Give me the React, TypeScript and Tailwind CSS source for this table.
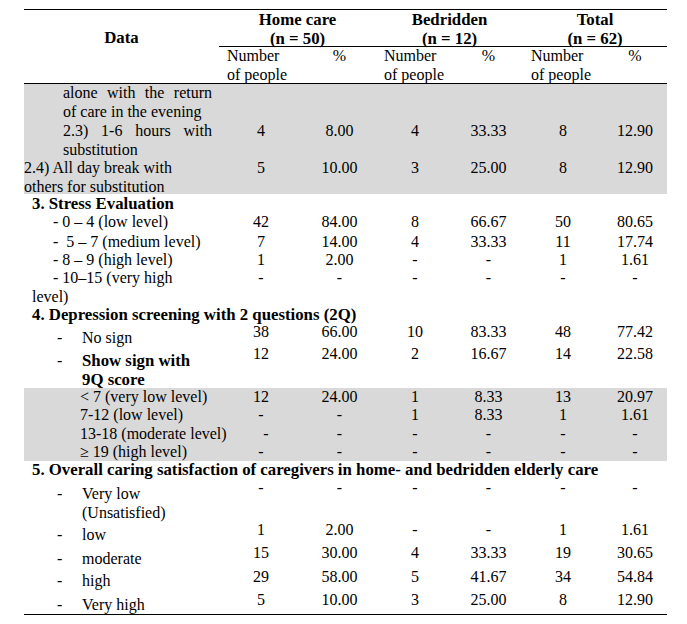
import type { ReactNode } from 'react';

const grid = 'grid grid-cols-[195px_84px_73px_78px_69px_80px_64px]';

type Row = {
  cls: string;
  label: ReactNode;
  vals?: string[];
  vt?: string;
  firstPad?: string;
};

const Dash = ({ text, bold, pt }: { text: ReactNode; bold?: boolean; pt: string }) => (
  <div className={`flex pl-[33px] ${pt}`}>
    <span className="w-[25px] shrink-0">-</span>
    <span className={bold ? 'font-bold text-[16.8px]' : ''}>{text}</span>
  </div>
);

const rows: Row[] = [
  {
    cls: 'h-[37px] bg-[#d9d9d9]',
    label: (
      <div className="pl-[39px] pr-[7px]">
        <p className="text-justify [text-align-last:justify]">alone with the return</p>
        <p>of care in the evening</p>
      </div>
    ),
  },
  {
    cls: 'h-[37px] bg-[#d9d9d9]',
    label: (
      <div className="pl-[39px] pr-[7px] pt-[1px]">
        <p className="text-justify [text-align-last:justify]">2.3) 1-6 hours with</p>
        <p>substitution</p>
      </div>
    ),
    vals: ['4', '8.00', '4', '33.33', '8', '12.90'],
    vt: 'pt-[1px]',
  },
  {
    cls: 'h-[36px] bg-[#d9d9d9]',
    label: (
      <div className="pt-[1px]">
        <p>2.4) All day break with</p>
        <p>others for substitution</p>
      </div>
    ),
    vals: ['5', '10.00', '3', '25.00', '8', '12.90'],
    vt: 'pt-[1px]',
  },
  { cls: 'h-[19px]', label: <p className="pl-[8px] pt-[1px] text-[16.8px] font-bold">3. Stress Evaluation</p> },
  {
    cls: 'h-[19px]',
    label: <p className="pl-[29px]">- 0 – 4 (low level)</p>,
    vals: ['42', '84.00', '8', '66.67', '50', '80.65'],
  },
  {
    cls: 'h-[19px]',
    label: <p className="pl-[29px] pt-[1px]">-&nbsp; 5 – 7 (medium level)</p>,
    vals: ['7', '14.00', '4', '33.33', '11', '17.74'],
    vt: 'pt-[1px]',
  },
  {
    cls: 'h-[18px]',
    label: <p className="pl-[29px]">- 8 – 9 (high level)</p>,
    vals: ['1', '2.00', '-', '-', '1', '1.61'],
  },
  {
    cls: 'h-[37px]',
    label: (
      <div>
        <p className="pl-[29px]">- 10–15 (very high</p>
        <p className="pl-[8px]">level)</p>
      </div>
    ),
    vals: ['-', '-', '-', '-', '-', '-'],
  },
  {
    cls: 'h-[16px]',
    label: (
      <p className="whitespace-nowrap pl-[8px] pt-[2px] text-[16.8px] leading-[14px] font-bold">
        4. Depression screening with 2 questions (2Q)
      </p>
    ),
  },
  {
    cls: 'h-[23px]',
    label: <Dash text="No sign" pt="pt-[7px]" />,
    vals: ['38', '66.00', '10', '83.33', '48', '77.42'],
    vt: 'pt-[2px] leading-[16px]',
  },
  {
    cls: 'h-[43px]',
    label: <Dash text={<>Show sign with<br />9Q score</>} bold pt="pt-[7px]" />,
    vals: ['12', '24.00', '2', '16.67', '14', '22.58'],
  },
  {
    cls: 'h-[18px] bg-[#d9d9d9]',
    label: <p className="pl-[56px]">&lt; 7 (very low level)</p>,
    vals: ['12', '24.00', '1', '8.33', '13', '20.97'],
  },
  {
    cls: 'h-[19px] bg-[#d9d9d9]',
    label: <p className="pl-[56px]">7-12 (low level)</p>,
    vals: ['-', '-', '1', '8.33', '1', '1.61'],
  },
  {
    cls: 'h-[18px] bg-[#d9d9d9]',
    label: <p className="whitespace-nowrap pl-[56px]">13-18 (moderate level)</p>,
    vals: ['-', '-', '-', '-', '-', '-'],
    firstPad: 'pl-[10px]',
  },
  {
    cls: 'h-[18px] bg-[#d9d9d9]',
    label: <p className="pl-[56px]">≥ 19 (high level)</p>,
    vals: ['-', '-', '-', '-', '-', '-'],
  },
  {
    cls: 'h-[17px]',
    label: (
      <p className="whitespace-nowrap pl-[8px] text-[16.8px] font-bold">
        5. Overall caring satisfaction of caregivers in home- and bedridden elderly care
      </p>
    ),
  },
  {
    cls: 'h-[43px]',
    label: <Dash text={<>Very low<br />(Unsatisfied)</>} pt="pt-[7px]" />,
    vals: ['-', '-', '-', '-', '-', '-'],
    vt: 'pt-[1px]',
  },
  {
    cls: 'h-[23px]',
    label: <Dash text="low" pt="pt-[5px]" />,
    vals: ['1', '2.00', '-', '-', '1', '1.61'],
  },
  {
    cls: 'h-[23px]',
    label: <Dash text="moderate" pt="pt-[6px]" />,
    vals: ['15', '30.00', '4', '33.33', '19', '30.65'],
  },
  {
    cls: 'h-[23px]',
    label: <Dash text="high" pt="pt-[5px]" />,
    vals: ['29', '58.00', '5', '41.67', '34', '54.84'],
    vt: 'pt-[1px]',
  },
  {
    cls: 'h-[24px]',
    label: <Dash text="Very high" pt="pt-[6px]" />,
    vals: ['5', '10.00', '3', '25.00', '8', '12.90'],
    vt: 'pt-[1px]',
  },
];

const groups = [
  ['Home care', '(n = 50)'],
  ['Bedridden', '(n = 12)'],
  ['Total', '(n = 62)'],
];

export default function App() {
  return (
    <div className="min-h-screen bg-white pl-[24px] pt-[9px] font-['Liberation_Serif',serif] text-[16px] leading-[18.6px] text-black">
      <div className="w-[643px]">
        {/* header */}
        <div className={`${grid} grid-rows-[37px_36px] border-y border-black`}>
          <div className="row-span-2 pt-[19px] text-center text-[16.8px] font-bold">Data</div>
          {groups.map(([name, n]) => (
            <div key={name} className="col-span-2 border-b border-black pt-[1px] text-center text-[16.8px] font-bold">
              <p>{name}</p>
              <p>{n}</p>
            </div>
          ))}
          {groups.map(([name]) => (
            <div key={name} className="col-span-2 grid grid-cols-subgrid">
              <div className="pl-[8px]">
                <p>Number</p>
                <p>of people</p>
              </div>
              <div className="text-center">%</div>
            </div>
          ))}
        </div>

        {/* body */}
        <div className="border-b border-black">
          {rows.map((r, i) => (
            <div key={i} className={`${grid} ${r.cls}`}>
              <div>{r.label}</div>
              {r.vals?.map((v, j) => (
                <div key={j} className={`text-center ${r.vt ?? ''} ${j === 0 && r.firstPad ? r.firstPad : ''}`}>
                  {v}
                </div>
              ))}
            </div>
          ))}
        </div>
      </div>
    </div>
  );
}
